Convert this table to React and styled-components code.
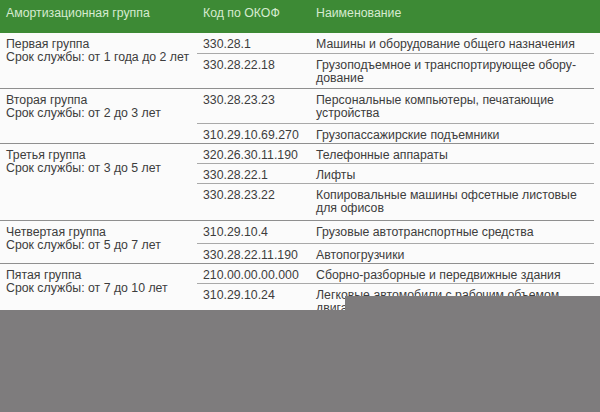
import React from "react";
import styled, { createGlobalStyle } from "styled-components";

const GlobalStyle = createGlobalStyle`
  html, body {
    margin: 0;
    padding: 0;
    background: #fbfbfb;
  }
  body {
    font-family: "Liberation Sans", Arial, sans-serif;
  }
`;

const Frame = styled.div`
  position: relative;
  width: 600px;
  height: 412px;
  overflow: hidden;
  background: #fbfbfb;
`;

const Table = styled.div`
  width: 594px;
  font-size: 12.3px;
  line-height: 13px;
  color: #3d3d3d;
`;

const Columns = styled.div`
  display: grid;
  grid-template-columns: 197px 114px 1fr;
`;

const Header = styled(Columns)`
  height: 33px;
  width: 600px;
  background: #3d8a35;
  color: #d6ead0;
  align-items: start;
  padding-top: 7px;
  box-sizing: border-box;
`;

const HeadCell = styled.div`
  padding-left: ${(p) => p.$pad || 6}px;
`;

const Group = styled(Columns)`
  border-bottom: 1.5px solid #8f8f8f;
`;

const GroupTitle = styled.div`
  padding: 5px 0 0 6px;
`;

const SubRows = styled.div`
  grid-column: 2 / 4;
  display: flex;
  flex-direction: column;
`;

const SubRow = styled.div`
  display: grid;
  grid-template-columns: 114px 1fr;
  height: ${(p) => p.$h}px;
  box-sizing: border-box;
  padding-top: 5px;
  border-bottom: ${(p) => (p.$last ? "none" : "1px solid #a9a9a9")};
`;

const Code = styled.div`
  padding-left: 6px;
  white-space: nowrap;
`;

const Name = styled.div`
  padding-left: 5px;
  white-space: nowrap;
`;

const Cover = styled.div`
  position: absolute;
  background: #7e7c7d;
  left: ${(p) => p.$x}px;
  top: ${(p) => p.$y}px;
  right: 0;
  bottom: 0;
`;

const groups = [
  {
    title: "Первая группа",
    term: "Срок службы: от 1 года до 2 лет",
    rows: [
      { code: "330.28.1", name: "Машины и оборудование общего назначения", h: 21 },
      { code: "330.28.22.18", name: "Грузоподъемное и транспортирующее обору-\nдование", h: 34 },
    ],
  },
  {
    title: "Вторая группа",
    term: "Срок службы: от 2 до 3 лет",
    rows: [
      { code: "330.28.23.23", name: "Персональные компьютеры, печатающие\nустройства", h: 35 },
      { code: "310.29.10.69.270", name: "Грузопассажирские подъемники", h: 19 },
    ],
  },
  {
    title: "Третья группа",
    term: "Срок службы: от 3 до 5 лет",
    rows: [
      { code: "320.26.30.11.190", name: "Телефонные аппараты", h: 20 },
      { code: "330.28.22.1", name: "Лифты", h: 20 },
      { code: "330.28.23.22", name: "Копировальные машины офсетные листовые\nдля офисов", h: 36 },
    ],
  },
  {
    title: "Четвертая группа",
    term: "Срок службы: от 5 до 7 лет",
    rows: [
      { code: "310.29.10.4", name: "Грузовые автотранспортные средства", h: 23 },
      { code: "330.28.22.11.190", name: "Автопогрузчики", h: 19 },
    ],
  },
  {
    title: "Пятая группа",
    term: "Срок службы: от 7 до 10 лет",
    rows: [
      { code: "210.00.00.00.000", name: "Сборно-разборные и передвижные здания", h: 20 },
      { code: "310.29.10.24", name: "Легковые автомобили с рабочим объемом\nдвигателя", h: 34 },
    ],
  },
];

const Lines = ({ text }) =>
  text.split("\n").map((line, i) => <div key={i}>{line}</div>);

export default function App() {
  return (
    <Frame>
      <GlobalStyle />
      <Table>
        <Header>
          <HeadCell>Амортизационная группа</HeadCell>
          <HeadCell>Код по ОКОФ</HeadCell>
          <HeadCell $pad={5}>Наименование</HeadCell>
        </Header>
        {groups.map((g) => (
          <Group key={g.title}>
            <GroupTitle>
              <div>{g.title}</div>
              <div>{g.term}</div>
            </GroupTitle>
            <SubRows>
              {g.rows.map((r, i) => (
                <SubRow key={r.code} $h={r.h} $last={i === g.rows.length - 1}>
                  <Code>{r.code}</Code>
                  <Name>
                    <Lines text={r.name} />
                  </Name>
                </SubRow>
              ))}
            </SubRows>
          </Group>
        ))}
      </Table>
      <Cover $x={345} $y={296} />
      <Cover $x={0} $y={310} />
    </Frame>
  );
}
